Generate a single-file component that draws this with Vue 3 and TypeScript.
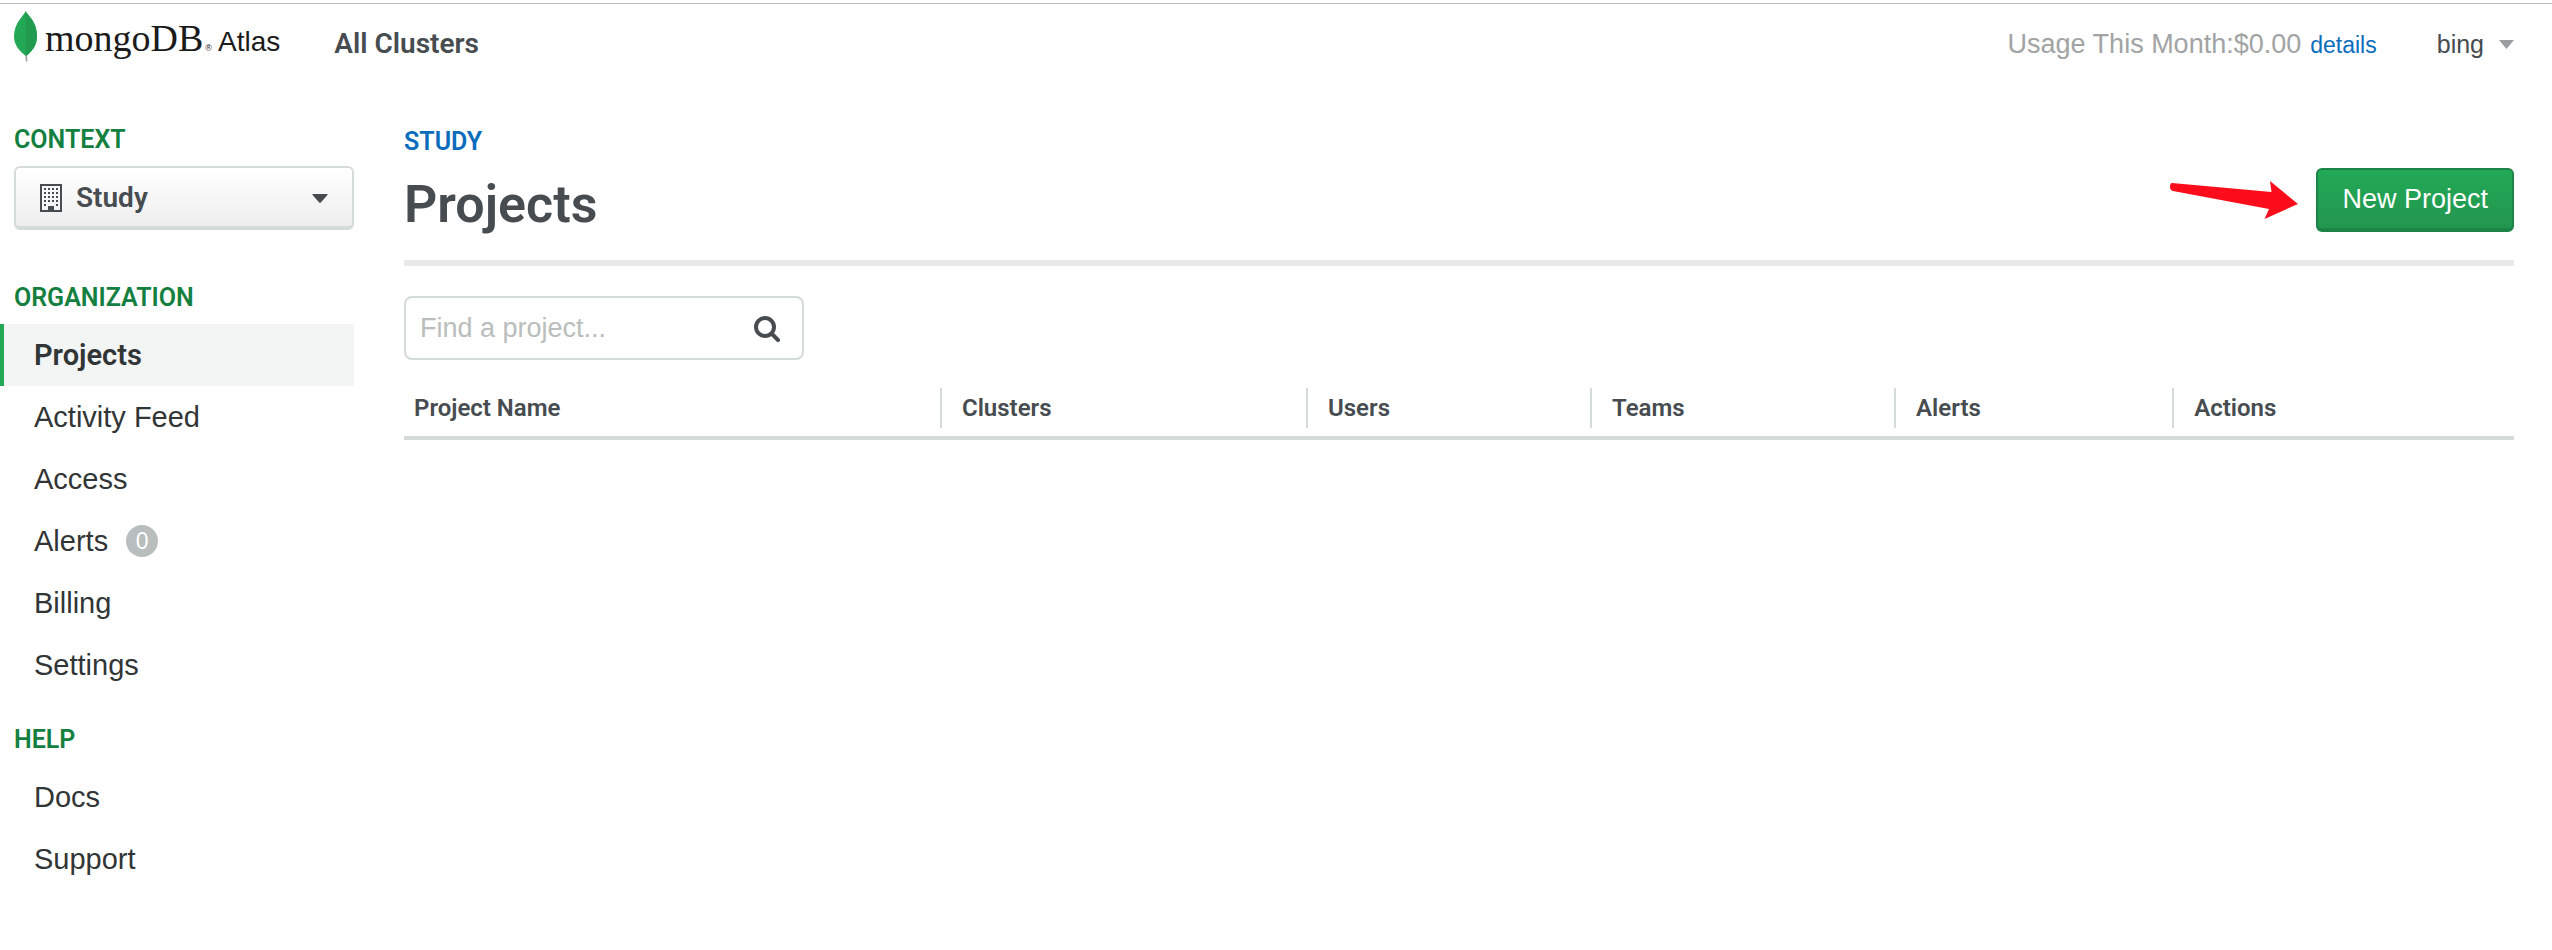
<script setup lang="ts">
import { ref } from 'vue'

interface NavItem {
  label: string
  active?: boolean
  badge?: number
}

interface NavGroup {
  title: string
  items: NavItem[]
}

const groups: NavGroup[] = [
  {
    title: 'ORGANIZATION',
    items: [
      { label: 'Projects', active: true },
      { label: 'Activity Feed' },
      { label: 'Access' },
      { label: 'Alerts', badge: 0 },
      { label: 'Billing' },
      { label: 'Settings' },
    ],
  },
  { title: 'HELP', items: [{ label: 'Docs' }, { label: 'Support' }] },
]

const columns: string[] = ['Project Name', 'Clusters', 'Users', 'Teams', 'Alerts', 'Actions']
const windowRows = [0, 1, 2, 3, 4]
const windowCols = [0, 1, 2, 3]
const context = ref('Study')
const query = ref('')
</script>

<template>
  <div class="page">
    <header class="topbar">
      <a class="brand" href="#" aria-label="mongoDB Atlas">
        <svg class="leaf" viewBox="0 0 24 52" width="24" height="52" aria-hidden="true">
          <path d="M11.2 43h1.8l.5 7.500h-1.8z" fill="#a3a5a4" />
          <path d="M11.700 0C12.500 4 23 9 23 25.500C23 35 17 41.500 12 45C7 41.500 0 35 0 25.500C0 12 9.500 5 11.700 0z" fill="#23a955" />
          <path d="M11.700 0C12.500 4 23 9 23 25.500C23 35 17 41.500 12 45z" fill="#229a50" />
        </svg>
        <span class="brand-text">
          <span class="wordmark">mongoDB</span><span class="reg">®</span><span class="product">Atlas</span>
        </span>
      </a>
      <a class="all-clusters" href="#">All Clusters</a>
      <div class="usage">
        <span>Usage This Month:$0.00</span>
        <a class="details" href="#">details</a>
      </div>
      <button class="user" type="button">
        bing
        <svg viewBox="0 0 15 9" width="15" height="9" aria-hidden="true"><path d="M0 0h15L7.500 9z" fill="#9b9d9e" /></svg>
      </button>
    </header>

    <div class="body">
      <aside class="sidebar">
        <label class="group-title" for="context">CONTEXT</label>
        <div class="context">
          <svg class="building" viewBox="0 0 22 28" width="22" height="28" aria-hidden="true">
            <path d="M1 1h20v26H1z" fill="none" stroke="#464c4f" stroke-width="2" />
            <g fill="#464c4f">
              <template v-for="r in windowRows" :key="r">
                <rect v-for="c in windowCols" v-show="r < 4 || c === 0 || c === 3" :key="c" :x="4 + c * 4" :y="4 + r * 4" width="2" height="2" />
              </template>
              <path d="M8 22h6v5H8z" />
            </g>
          </svg>
          <select id="context" v-model="context">
            <option>Study</option>
          </select>
          <svg class="context-caret" viewBox="0 0 16 9" width="16" height="9" aria-hidden="true"><path d="M1 0h14q1 0 .5 1L8.800 8.500q-.8.800-1.600 0L.5 1Q0 0 1 0z" fill="#464c4f" /></svg>
        </div>
        <nav v-for="group in groups" :key="group.title" class="group" :aria-label="group.title">
          <div class="group-title">{{ group.title }}</div>
          <a v-for="item in group.items" :key="item.label" class="nav-item" :class="{ active: item.active }" href="#">
            {{ item.label }}
            <span v-if="item.badge !== undefined" class="badge">{{ item.badge }}</span>
          </a>
        </nav>
      </aside>

      <main class="main">
        <a class="crumb" href="#">STUDY</a>
        <div class="title-row">
          <h1>Projects</h1>
          <svg class="arrow" viewBox="0 0 128 38" width="128" height="38" aria-hidden="true">
            <path d="M2 2L101.500 11L100 0L128 23L94.500 38L99 28L3 10Q0 9 0 6Q0 2 2 2z" fill="#fd0d1b" />
          </svg>
          <button class="primary" type="button">New Project</button>
        </div>
        <div class="search">
          <input v-model="query" type="text" placeholder="Find a project..." aria-label="Find a project" />
          <svg viewBox="0 0 26 26" width="26" height="26" fill="none" stroke="#464c4f" aria-hidden="true">
            <circle cx="11" cy="11" r="9" stroke-width="4" />
            <path d="M18 18l6 6" stroke-width="4" stroke-linecap="round" />
          </svg>
        </div>
        <table>
          <thead>
            <tr>
              <th v-for="column in columns" :key="column" scope="col"><span>{{ column }}</span></th>
            </tr>
          </thead>
        </table>
      </main>
    </div>
  </div>
</template>

<style>
body {
  background: #fff;
}
</style>

<style scoped>
.page {
  margin-top: 3px;
  border-top: 1px solid #bbbdc1;
  color: #464c4f;
  font-family: 'Liberation Sans', Arial, sans-serif;
  font-size: 29px;
}

.page * {
  box-sizing: border-box;
}

a {
  color: inherit;
  text-decoration: none;
}

button {
  font-family: inherit;
  cursor: pointer;
}

.topbar {
  display: flex;
  align-items: flex-start;
  height: 82px;
  padding: 24px 38px 0 14px;
  line-height: 32px;
}

.brand {
  display: flex;
  margin-top: -17px;
  color: #1b1b1b;
}

.leaf {
  margin-right: 7px;
}

.brand-text {
  display: flex;
  align-items: baseline;
  margin-top: 6px;
  line-height: 42px;
}

.wordmark {
  font-family: 'Liberation Serif', 'Times New Roman', serif;
  font-size: 38px;
}

.reg {
  font-size: 9px;
  margin: 0 6px 0 2px;
}

.product {
  font-size: 28px;
}

.all-clusters {
  margin: 0 auto 0 54px;
  font-family: Roboto, sans-serif;
  font-size: 28px;
  font-weight: 600;
}

.usage {
  display: flex;
  align-items: baseline;
  gap: 9px;
  margin-right: 60px;
  color: #a1a3a4;
  font-size: 27px;
}

.details {
  color: #0b6cbc;
  font-size: 23px;
}

.user {
  display: flex;
  align-items: center;
  gap: 15px;
  padding: 0;
  border: 0;
  background: none;
  color: #464c4f;
  font-size: 25px;
  line-height: 32px;
}

.body {
  display: flex;
  gap: 50px;
  padding-right: 38px;
}

.sidebar {
  flex: none;
  width: 354px;
  padding-top: 42px;
}

.group-title {
  display: block;
  padding-left: 14px;
  margin-bottom: 14px;
  color: #13803f;
  font: 600 25px/24px Roboto, sans-serif;
}

.context {
  position: relative;
  margin: 0 0 56px 14px;
}

.context select {
  display: block;
  width: 100%;
  height: 64px;
  padding: 2px 50px 0 60px;
  border: 2px solid #d5dada;
  border-bottom-width: 4px;
  border-radius: 6px;
  background: linear-gradient(#fff, #eee);
  color: #464c4f;
  font: 600 28px/32px Roboto, sans-serif;
  appearance: none;
}

.building {
  position: absolute;
  left: 26px;
  top: 18px;
}

.context-caret {
  position: absolute;
  right: 26px;
  top: 28px;
}

.group {
  margin-bottom: 32px;
}

.nav-item {
  display: flex;
  align-items: center;
  gap: 18px;
  height: 62px;
  padding-left: 30px;
  border-left: 4px solid transparent;
  color: #313536;
}

.nav-item.active {
  border-left-color: #23a955;
  background: #f3f5f5;
  font-family: Roboto, sans-serif;
  font-weight: 600;
}

.badge {
  width: 32px;
  height: 32px;
  border-radius: 50%;
  background: #b8bdbd;
  color: #fff;
  font-size: 23px;
  line-height: 32px;
  text-align: center;
}

.main {
  flex: 1;
  min-width: 0;
  padding-top: 44px;
}

.crumb {
  display: block;
  color: #0b6cbc;
  font: 600 25px/24px Roboto, sans-serif;
}

.title-row {
  display: flex;
  align-items: center;
  gap: 18px;
  padding: 14px 0 28px;
  border-bottom: 6px solid #e7eae9;
}

h1 {
  margin: 0 auto 0 0;
  padding-top: 10px;
  font: 600 52px/54px Roboto, sans-serif;
}

.primary {
  height: 64px;
  padding: 0 24px;
  border: 2px solid #1e8346;
  border-bottom-width: 4px;
  border-radius: 6px;
  background: linear-gradient(#22a956, #239650);
  color: #fff;
  font-size: 27px;
}

.search {
  position: relative;
  width: 400px;
  margin: 30px 0 28px;
}

.search input {
  display: block;
  width: 100%;
  height: 64px;
  padding: 0 60px 0 14px;
  border: 2px solid #d5dada;
  border-radius: 8px;
  color: #464c4f;
  font: 27px/32px 'Liberation Sans', Arial, sans-serif;
}

.search input::placeholder {
  color: #b9bdbc;
}

.search svg {
  position: absolute;
  right: 24px;
  top: 20px;
}

table {
  width: 100%;
  border-collapse: collapse;
  table-layout: fixed;
}

th {
  padding: 0 0 8px;
  border-bottom: 4px solid #d5dada;
  font: 600 24px/40px Roboto, sans-serif;
  text-align: left;
}

th span {
  display: block;
  padding-left: 20px;
  border-left: 2px solid #d5dada;
}

th:first-child span {
  padding-left: 10px;
  border-left: 0;
}

th:nth-child(1) { width: 25.4%; }
th:nth-child(2) { width: 17.35%; }
th:nth-child(3) { width: 13.46%; }
th:nth-child(4) { width: 14.41%; }
th:nth-child(5) { width: 13.18%; }
</style>
